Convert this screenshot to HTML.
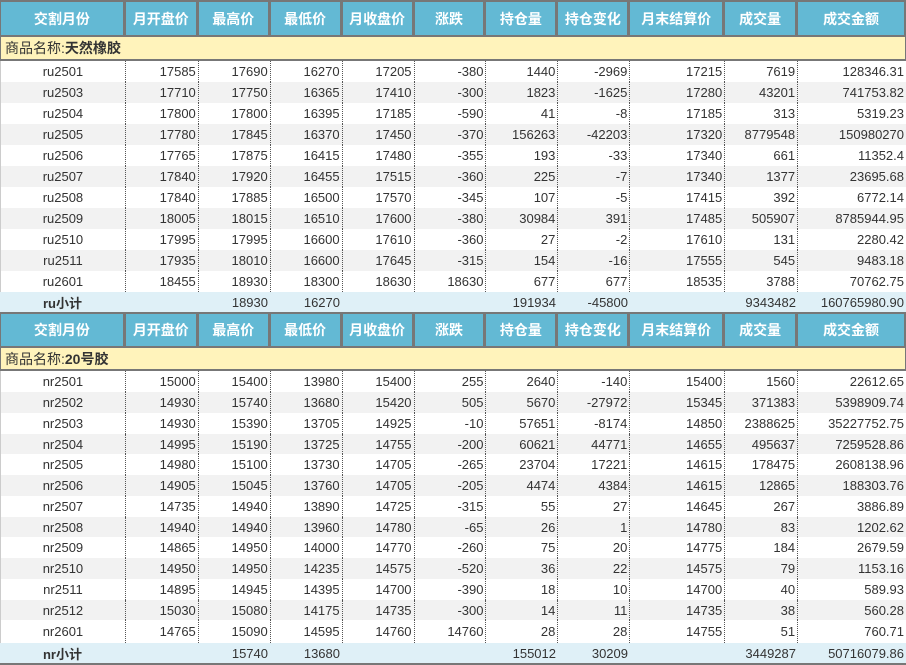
<!DOCTYPE html>
<html><head><meta charset="utf-8"><style>
*{margin:0;padding:0;box-sizing:border-box}
body{width:906px;height:665px;background:#fff;font-family:"Liberation Sans","Noto Sans CJK SC",sans-serif;font-size:13px;color:#333;overflow:hidden;position:relative}
.r{position:absolute;left:0;width:906px;display:flex}
.r>div{height:100%;display:flex;align-items:center;justify-content:flex-end;padding-right:2px;white-space:nowrap}
.r>div:nth-child(1){width:125px;justify-content:center;padding:0}
.r>div:nth-child(2),.r>div:nth-child(3),.r>div:nth-child(4),.r>div:nth-child(5),.r>div:nth-child(6),.r>div:nth-child(7),.r>div:nth-child(8){width:72px}
.r>div:nth-child(2){width:73px}
.r>div:nth-child(9){width:95px}
.r>div:nth-child(10){width:73px}
.r>div:nth-child(11){width:108px}
.h{background:#63b9d4;color:#fff;font-weight:bold;font-size:14px;border-top:2px solid #777;border-bottom:2px solid #777;border-left:1px solid #777}
.h>div{justify-content:center!important;padding:0!important;border-right:3px solid #777}
.h>div:last-child{border-right:2px solid #777}
.c{background:#fff3bb;border-bottom:2px solid #777;border-left:1px solid #777;border-right:1px solid #777;padding-left:4px;font-size:14px;align-items:center}
.d>div{border-right:1px dotted #555}
.d>div:last-child{border-right:none}
.d{border-left:1px solid #ccc}
.g{background:#f2f2f2}
.s{background:#dff0f7}
.s>div:first-child{font-weight:bold}
.s2{border-bottom:2px solid #777}
</style></head><body>
<div class="r h" style="top:0;height:37px"><div>交割月份</div><div>月开盘价</div><div>最高价</div><div>最低价</div><div>月收盘价</div><div>涨跌</div><div>持仓量</div><div>持仓变化</div><div>月末结算价</div><div>成交量</div><div>成交金额</div></div>
<div class="r c" style="top:37px;height:24px">商品名称:<b>天然橡胶</b></div>
<div class="r d" style="top:61px;height:21px"><div>ru2501</div><div>17585</div><div>17690</div><div>16270</div><div>17205</div><div>-380</div><div>1440</div><div>-2969</div><div>17215</div><div>7619</div><div>128346.31</div></div>
<div class="r d g" style="top:82px;height:21px"><div>ru2503</div><div>17710</div><div>17750</div><div>16365</div><div>17410</div><div>-300</div><div>1823</div><div>-1625</div><div>17280</div><div>43201</div><div>741753.82</div></div>
<div class="r d" style="top:103px;height:21px"><div>ru2504</div><div>17800</div><div>17800</div><div>16395</div><div>17185</div><div>-590</div><div>41</div><div>-8</div><div>17185</div><div>313</div><div>5319.23</div></div>
<div class="r d g" style="top:124px;height:21px"><div>ru2505</div><div>17780</div><div>17845</div><div>16370</div><div>17450</div><div>-370</div><div>156263</div><div>-42203</div><div>17320</div><div>8779548</div><div>150980270</div></div>
<div class="r d" style="top:145px;height:21px"><div>ru2506</div><div>17765</div><div>17875</div><div>16415</div><div>17480</div><div>-355</div><div>193</div><div>-33</div><div>17340</div><div>661</div><div>11352.4</div></div>
<div class="r d g" style="top:166px;height:21px"><div>ru2507</div><div>17840</div><div>17920</div><div>16455</div><div>17515</div><div>-360</div><div>225</div><div>-7</div><div>17340</div><div>1377</div><div>23695.68</div></div>
<div class="r d" style="top:187px;height:21px"><div>ru2508</div><div>17840</div><div>17885</div><div>16500</div><div>17570</div><div>-345</div><div>107</div><div>-5</div><div>17415</div><div>392</div><div>6772.14</div></div>
<div class="r d g" style="top:208px;height:21px"><div>ru2509</div><div>18005</div><div>18015</div><div>16510</div><div>17600</div><div>-380</div><div>30984</div><div>391</div><div>17485</div><div>505907</div><div>8785944.95</div></div>
<div class="r d" style="top:229px;height:21px"><div>ru2510</div><div>17995</div><div>17995</div><div>16600</div><div>17610</div><div>-360</div><div>27</div><div>-2</div><div>17610</div><div>131</div><div>2280.42</div></div>
<div class="r d g" style="top:250px;height:21px"><div>ru2511</div><div>17935</div><div>18010</div><div>16600</div><div>17645</div><div>-315</div><div>154</div><div>-16</div><div>17555</div><div>545</div><div>9483.18</div></div>
<div class="r d" style="top:271px;height:21px"><div>ru2601</div><div>18455</div><div>18930</div><div>18300</div><div>18630</div><div>18630</div><div>677</div><div>677</div><div>18535</div><div>3788</div><div>70762.75</div></div>
<div class="r s" style="top:292px;height:20px"><div>ru小计</div><div></div><div>18930</div><div>16270</div><div></div><div></div><div>191934</div><div>-45800</div><div></div><div>9343482</div><div>160765980.90</div></div>
<div class="r h" style="top:312px;height:36px"><div>交割月份</div><div>月开盘价</div><div>最高价</div><div>最低价</div><div>月收盘价</div><div>涨跌</div><div>持仓量</div><div>持仓变化</div><div>月末结算价</div><div>成交量</div><div>成交金额</div></div>
<div class="r c" style="top:348px;height:23px">商品名称:<b>20号胶</b></div>
<div class="r d" style="top:371px;height:21px"><div>nr2501</div><div>15000</div><div>15400</div><div>13980</div><div>15400</div><div>255</div><div>2640</div><div>-140</div><div>15400</div><div>1560</div><div>22612.65</div></div>
<div class="r d g" style="top:392px;height:21px"><div>nr2502</div><div>14930</div><div>15740</div><div>13680</div><div>15420</div><div>505</div><div>5670</div><div>-27972</div><div>15345</div><div>371383</div><div>5398909.74</div></div>
<div class="r d" style="top:413px;height:21px"><div>nr2503</div><div>14930</div><div>15390</div><div>13705</div><div>14925</div><div>-10</div><div>57651</div><div>-8174</div><div>14850</div><div>2388625</div><div>35227752.75</div></div>
<div class="r d g" style="top:434px;height:20px"><div>nr2504</div><div>14995</div><div>15190</div><div>13725</div><div>14755</div><div>-200</div><div>60621</div><div>44771</div><div>14655</div><div>495637</div><div>7259528.86</div></div>
<div class="r d" style="top:454px;height:21px"><div>nr2505</div><div>14980</div><div>15100</div><div>13730</div><div>14705</div><div>-265</div><div>23704</div><div>17221</div><div>14615</div><div>178475</div><div>2608138.96</div></div>
<div class="r d g" style="top:475px;height:21px"><div>nr2506</div><div>14905</div><div>15045</div><div>13760</div><div>14705</div><div>-205</div><div>4474</div><div>4384</div><div>14615</div><div>12865</div><div>188303.76</div></div>
<div class="r d" style="top:496px;height:21px"><div>nr2507</div><div>14735</div><div>14940</div><div>13890</div><div>14725</div><div>-315</div><div>55</div><div>27</div><div>14645</div><div>267</div><div>3886.89</div></div>
<div class="r d g" style="top:517px;height:20px"><div>nr2508</div><div>14940</div><div>14940</div><div>13960</div><div>14780</div><div>-65</div><div>26</div><div>1</div><div>14780</div><div>83</div><div>1202.62</div></div>
<div class="r d" style="top:537px;height:21px"><div>nr2509</div><div>14865</div><div>14950</div><div>14000</div><div>14770</div><div>-260</div><div>75</div><div>20</div><div>14775</div><div>184</div><div>2679.59</div></div>
<div class="r d g" style="top:558px;height:21px"><div>nr2510</div><div>14950</div><div>14950</div><div>14235</div><div>14575</div><div>-520</div><div>36</div><div>22</div><div>14575</div><div>79</div><div>1153.16</div></div>
<div class="r d" style="top:579px;height:21px"><div>nr2511</div><div>14895</div><div>14945</div><div>14395</div><div>14700</div><div>-390</div><div>18</div><div>10</div><div>14700</div><div>40</div><div>589.93</div></div>
<div class="r d g" style="top:600px;height:20px"><div>nr2512</div><div>15030</div><div>15080</div><div>14175</div><div>14735</div><div>-300</div><div>14</div><div>11</div><div>14735</div><div>38</div><div>560.28</div></div>
<div class="r d" style="top:620px;height:23px"><div>nr2601</div><div>14765</div><div>15090</div><div>14595</div><div>14760</div><div>14760</div><div>28</div><div>28</div><div>14755</div><div>51</div><div>760.71</div></div>
<div class="r s s2" style="top:643px;height:22px"><div>nr小计</div><div></div><div>15740</div><div>13680</div><div></div><div></div><div>155012</div><div>30209</div><div></div><div>3449287</div><div>50716079.86</div></div>
</body></html>
